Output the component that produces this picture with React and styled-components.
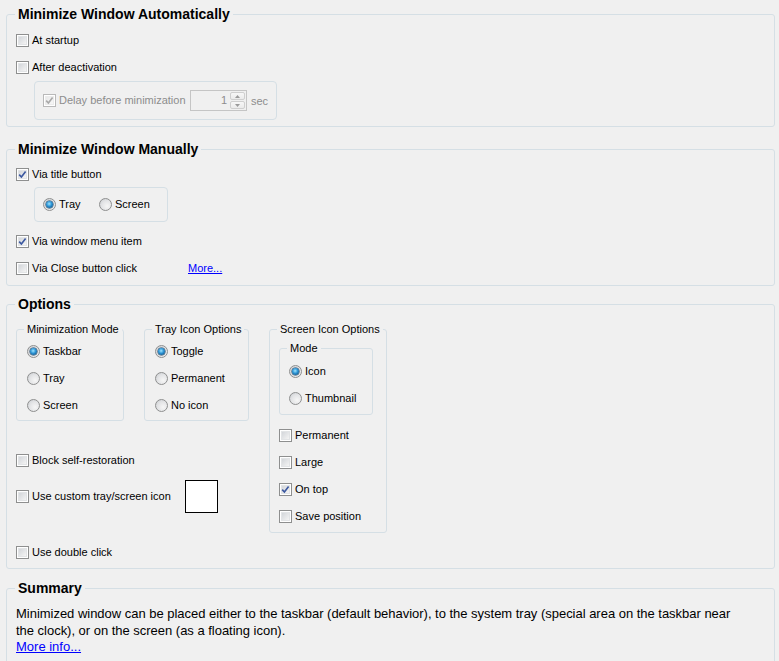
import React from 'react';
import styled, { createGlobalStyle } from 'styled-components';

const GlobalStyle = createGlobalStyle`
    html, body {
        margin: 0;
        padding: 0;
        background: #f0f0f0;
        overflow: hidden;
    }
    body {
        font-family: "Liberation Sans", Arial, sans-serif;
        color: #000;
    }
`

const Page = styled.div`
    display: flex;
    flex-direction: column;
    padding: 6px 4px 0 6px;
    width: 779px;
    height: 661px;
    box-sizing: border-box;
`

const Group = styled.fieldset`
    margin: ${({ $mt }) => $mt || 0}px 0 0 0;
    padding: 0;
    min-width: 0;
    border: 1px solid #d5dfe5;
    border-radius: 3px;
    width: ${({ $w }) => ($w ? `${$w}px` : 'auto')};
    box-sizing: border-box;
    flex: none;
`

const Title = styled.legend`
    margin-left: ${({ $small }) => ($small ? 7 : 8)}px;
    padding: 0 3px;
    font-size: ${({ $small }) => ($small ? 11 : 14)}px;
    font-weight: ${({ $small }) => ($small ? 'normal' : 'bold')};
    line-height: ${({ $small }) => ($small ? 13 : 16)}px;
    background: #f0f0f0;
`

const Body = styled.div`
    display: flex;
    flex-direction: column;
    padding: ${({ $pt }) => $pt}px 0 ${({ $pb }) => $pb}px ${({ $pl }) => $pl}px;
`

const Row = styled.div`
    display: flex;
    align-items: center;
    height: ${({ $h }) => $h || 13}px;
    margin-top: ${({ $mt }) => $mt || 0}px;
    flex: none;
`

const Item = styled.label`
    display: flex;
    align-items: center;
    width: ${({ $w }) => ($w ? `${$w}px` : 'auto')};
    flex: none;
`

const Label = styled.span`
    margin-left: 3px;
    font-size: 11px;
    line-height: 13px;
    white-space: nowrap;
    color: ${({ $disabled }) => ($disabled ? '#8d8d8d' : '#000')};
`

const Box = styled.span`
    position: relative;
    width: 13px;
    height: 13px;
    box-sizing: border-box;
    border: 1px solid ${({ $disabled }) => ($disabled ? '#b9b9b9' : '#8e8f8f')};
    background: #fff;
    flex: none;
    &::before {
        content: '';
        position: absolute;
        inset: 1px;
        background: ${({ $disabled }) => ($disabled
        ? 'linear-gradient(135deg, #e9e9e9, #f7f7f7)'
        : 'linear-gradient(135deg, #d3d6da, #f4f4f4)')};
        border: 1px solid ${({ $disabled }) => ($disabled ? '#ececec' : '#e2e4e6')};
        box-sizing: border-box;
    }
    svg {
        position: absolute;
        inset: 0;
    }
`

const Dot = styled.span`
    position: relative;
    width: 13px;
    height: 13px;
    box-sizing: border-box;
    border-radius: 50%;
    border: 1px solid #8e8f8f;
    background: radial-gradient(circle at 65% 65%, #f6f6f6 0%, #e2e3e5 55%, #c6c9cd 100%);
    flex: none;
    &::after {
        content: '';
        display: ${({ $on }) => ($on ? 'block' : 'none')};
        position: absolute;
        left: 2px;
        top: 2px;
        width: 7px;
        height: 7px;
        border-radius: 50%;
        background: radial-gradient(circle at 45% 40%, #9fe6ff 0%, #2a92d4 45%, #0a3b63 100%);
        box-shadow: 0 0 0 0.5px #163c5c;
    }
`

const Panel = styled.div`
    display: flex;
    align-items: center;
    margin: ${({ $mt }) => $mt}px 0 0 18px;
    width: ${({ $w }) => $w}px;
    height: ${({ $h }) => $h}px;
    padding-left: 8px;
    box-sizing: border-box;
    border: 1px solid #d5dfe5;
    border-radius: 4px;
    flex: none;
`

const Spin = styled.div`
    display: flex;
    align-items: stretch;
    width: 57px;
    height: 21px;
    box-sizing: border-box;
    border: 1px solid #c5c5c5;
    background: #f0f0f0;
    padding: 1px;
`

const SpinValue = styled.div`
    flex: 1;
    text-align: right;
    padding-right: 3px;
    font-size: 11px;
    line-height: 17px;
    color: #8d8d8d;
`

const SpinButtons = styled.div`
    display: flex;
    flex-direction: column;
    width: 15px;
    gap: 1px;
`

const SpinButton = styled.div`
    flex: 1;
    display: flex;
    align-items: center;
    justify-content: center;
    border: 1px solid #cfcfcf;
    border-radius: 2px;
    background: linear-gradient(#f7f7f7, #ebebeb);
`

const Unit = styled.span`
    margin-left: 4px;
    font-size: 11px;
    color: #8d8d8d;
`

const Link = styled.a`
    font-size: 11px;
    line-height: 13px;
    color: #0000ff;
    text-decoration: underline;
    cursor: pointer;
`

const Columns = styled.div`
    display: flex;
    align-items: flex-start;
    gap: ${({ $gap }) => $gap}px;
`

const Column = styled.div`
    display: flex;
    flex-direction: column;
`

const IconWell = styled.div`
    width: 33px;
    height: 33px;
    box-sizing: border-box;
    border: 1px solid #000;
    background: #fff;
`

const Text = styled.p`
    margin: 0;
    font-size: 13px;
    line-height: 17px;
    letter-spacing: -0.02px;
    white-space: nowrap;
`

const MoreLink = styled(Link)`
    font-size: 13px;
    line-height: 16px;
    align-self: flex-start;
`

const Check = ({ on, disabled, label, w }) => (
    <Item $w={w}>
        <Box $disabled={disabled}>
            {on && (
                <svg width="11" height="11" viewBox="0 0 11 11">
                    <path d="M2.2 5.6 L4.4 8 L8.6 2.4" fill="none"
                        stroke={disabled ? '#a9a9a9' : '#3b58a0'} strokeWidth="1.6" />
                </svg>
            )}
        </Box>
        <Label $disabled={disabled}>{label}</Label>
    </Item>
)

const Radio = ({ on, label, w }) => (
    <Item $w={w}>
        <Dot $on={on} />
        <Label>{label}</Label>
    </Item>
)

const Arrow = ({ up }) => (
    <svg width="5" height="3" viewBox="0 0 5 3">
        <path d={up ? 'M0 3 L2.5 0 L5 3 Z' : 'M0 0 L2.5 3 L5 0 Z'} fill="#9a9a9a" />
    </svg>
)

const RadioGroup = ({ title, items, selected, w }) => (
    <Group $w={w}>
        <Title $small>{title}</Title>
        <Body $pt={9} $pb={8} $pl={10}>
            {items.map((item, i) => (
                <Row key={item} $mt={i ? 14 : 0}>
                    <Radio on={i === selected} label={item} />
                </Row>
            ))}
        </Body>
    </Group>
)

const App = () => {
    return (
        <Page>
            <GlobalStyle />

            <Group>
                <Title>Minimize Window Automatically</Title>
                <Body $pt={12} $pb={6} $pl={9}>
                    <Row><Check label="At startup" /></Row>
                    <Row $mt={14}><Check label="After deactivation" /></Row>
                    <Panel $mt={7} $w={243} $h={39}>
                        <Check on disabled label="Delay before minimization" w={147} />
                        <Spin>
                            <SpinValue>1</SpinValue>
                            <SpinButtons>
                                <SpinButton><Arrow up /></SpinButton>
                                <SpinButton><Arrow /></SpinButton>
                            </SpinButtons>
                        </Spin>
                        <Unit>sec</Unit>
                    </Panel>
                </Body>
            </Group>

            <Group $mt={14}>
                <Title>Minimize Window Manually</Title>
                <Body $pt={11} $pb={10} $pl={9}>
                    <Row><Check on label="Via title button" /></Row>
                    <Panel $mt={6} $w={134} $h={35}>
                        <Radio on label="Tray" w={56} />
                        <Radio label="Screen" />
                    </Panel>
                    <Row $mt={13}><Check on label="Via window menu item" /></Row>
                    <Row $mt={14}>
                        <Check label="Via Close button click" w={172} />
                        <Link>More...</Link>
                    </Row>
                </Body>
            </Group>

            <Group $mt={10}>
                <Title>Options</Title>
                <Body $pt={11} $pb={9} $pl={9}>
                    <Columns $gap={20}>
                        <Column>
                            <Columns $gap={20}>
                                <RadioGroup w={108} title="Minimization Mode"
                                    items={['Taskbar', 'Tray', 'Screen']} selected={0} />
                                <RadioGroup w={105} title="Tray Icon Options"
                                    items={['Toggle', 'Permanent', 'No icon']} selected={0} />
                            </Columns>
                            <Row $mt={33}><Check label="Block self-restoration" /></Row>
                            <Row $mt={13} $h={33}>
                                <Check label="Use custom tray/screen icon" w={169} />
                                <IconWell />
                            </Row>
                        </Column>

                        <Group $w={118}>
                            <Title $small>Screen Icon Options</Title>
                            <Body $pt={6} $pb={9} $pl={9}>
                                <Group $w={94}>
                                    <Title $small>Mode</Title>
                                    <Body $pt={10} $pb={9} $pl={9}>
                                        <Row><Radio on label="Icon" /></Row>
                                        <Row $mt={14}><Radio label="Thumbnail" /></Row>
                                    </Body>
                                </Group>
                                <Row $mt={14}><Check label="Permanent" /></Row>
                                <Row $mt={14}><Check label="Large" /></Row>
                                <Row $mt={14}><Check on label="On top" /></Row>
                                <Row $mt={14}><Check label="Save position" /></Row>
                            </Body>
                        </Group>
                    </Columns>
                    <Row $mt={13}><Check label="Use double click" /></Row>
                </Body>
            </Group>

            <Group $mt={11}>
                <Title>Summary</Title>
                <Body $pt={9} $pb={30} $pl={9}>
                    <Text>Minimized window can be placed either to the taskbar (default behavior), to the system tray (special area on the taskbar near</Text>
                    <Text>the clock), or on the screen (as a floating icon).</Text>
                    <MoreLink>More info...</MoreLink>
                </Body>
            </Group>
        </Page>
    )
}

export default App;
